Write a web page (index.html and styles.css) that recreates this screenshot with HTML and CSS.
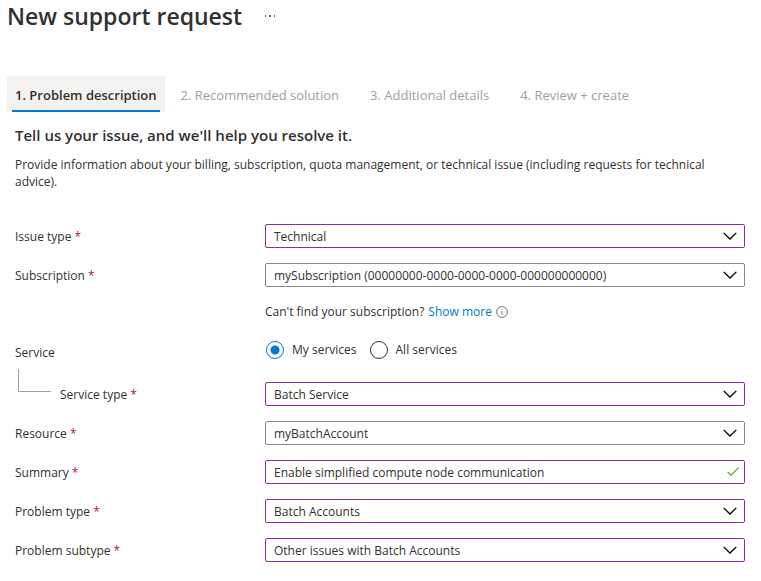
FILE: index.html
```html
<!DOCTYPE html>
<html lang="en">
<head>
<meta charset="utf-8">
<meta name="viewport" content="width=device-width, initial-scale=1">
<title>New support request</title>
<link rel="stylesheet" href="styles.css">
</head>
<body>
<svg class="symbols" aria-hidden="true">
  <symbol id="chevron" viewBox="0 0 14 8"><path d="M.7.9 7 7 13.3.9" fill="none" stroke="currentColor" stroke-width="1.3"/></symbol>
</svg>
<header class="page-header">
  <h1 class="page-title">New support request</h1>
  <button class="more" type="button" aria-label="More actions">
    <svg width="12" height="2" viewBox="0 0 12 2"><path d="M1 0h1v2H1zM5 0h2v2H5zM10 0h1v2h-1z" fill="#605e5c"/></svg>
  </button>
</header>
<nav class="tabs">
  <button class="tab tab-active" type="button">1. Problem description</button>
  <button class="tab" type="button" disabled>2. Recommended solution</button>
  <button class="tab" type="button" disabled>3. Additional details</button>
  <button class="tab" type="button" disabled>4. Review + create</button>
</nav>
<main class="content">
  <h2 class="section-title">Tell us your issue, and we'll help you resolve it.</h2>
  <p class="intro">Provide information about your billing, subscription, quota management, or technical issue (including requests for technical advice).</p>
  <form class="form">
    <div class="row">
      <label class="label" for="issue">Issue type <span class="required">*</span></label>
      <div class="field"><select class="control edited" id="issue"><option>Technical</option></select><svg class="chevron"><use href="#chevron"/></svg></div>
    </div>
    <div class="row">
      <label class="label" for="subscription">Subscription <span class="required">*</span></label>
      <div class="field"><select class="control" id="subscription"><option>mySubscription (00000000-0000-0000-0000-000000000000)</option></select><svg class="chevron"><use href="#chevron"/></svg></div>
    </div>
    <div class="row">
      <p class="hint">Can't find your subscription? <a class="link" href="#">Show more</a>
        <svg class="info" viewBox="0 0 12 12"><circle cx="6" cy="6" r="5.4" fill="none" stroke="#797775"/><path d="M5.5 3h1v1h-1zM5.5 5h1v4h-1z" fill="#797775"/></svg>
      </p>
    </div>
    <div class="row service-row" role="radiogroup" aria-labelledby="service">
      <span class="label" id="service">Service</span>
      <div class="radios">
        <label class="choice"><input class="radio" type="radio" name="service" checked>My services</label>
        <label class="choice"><input class="radio" type="radio" name="service">All services</label>
      </div>
    </div>
    <div class="row">
      <label class="label nested" for="service-type"><span class="branch"></span><span>Service type <span class="required">*</span></span></label>
      <div class="field"><select class="control edited" id="service-type"><option>Batch Service</option></select><svg class="chevron"><use href="#chevron"/></svg></div>
    </div>
    <div class="row">
      <label class="label" for="resource">Resource <span class="required">*</span></label>
      <div class="field"><select class="control" id="resource"><option>myBatchAccount</option></select><svg class="chevron"><use href="#chevron"/></svg></div>
    </div>
    <div class="row">
      <label class="label" for="summary">Summary <span class="required">*</span></label>
      <div class="field"><input class="control edited" id="summary" type="text" value="Enable simplified compute node communication"><svg class="check" viewBox="0 0 12 9"><path d="M.5 4.8 4 8.2 11.6.6" fill="none" stroke="#57a300" stroke-width="1.1"/></svg></div>
    </div>
    <div class="row">
      <label class="label" for="problem">Problem type <span class="required">*</span></label>
      <div class="field"><select class="control edited" id="problem"><option>Batch Accounts</option></select><svg class="chevron"><use href="#chevron"/></svg></div>
    </div>
    <div class="row">
      <label class="label" for="subtype">Problem subtype <span class="required">*</span></label>
      <div class="field"><select class="control edited" id="subtype"><option>Other issues with Batch Accounts</option></select><svg class="chevron"><use href="#chevron"/></svg></div>
    </div>
  </form>
</main>
</body>
</html>
```
FILE: styles.css
```css
* { box-sizing: border-box; }

body {
  margin: 0;
  background: #fff;
  color: #323130;
  font: 12px/18px "Segoe UI", "Open Sans", "Noto Sans", sans-serif;
}

h1, h2, p { margin: 0; }

button, input, select { font: inherit; color: inherit; }

.symbols { display: none; }

.page-header {
  display: flex;
  align-items: center;
  gap: 16px;
  padding: 0 7px;
}

.page-title { font-size: 23px; line-height: 32px; font-weight: 600; }

.more {
  display: flex;
  padding: 6px;
  border: 0;
  background: none;
}

.tabs {
  display: flex;
  margin: 44px 7px 0;
}

.tab {
  height: 36px;
  padding: 2px 8px 0;
  margin-right: 15px;
  border: 0;
  background: none;
  color: #a19f9d;
  font-size: 13px;
  white-space: nowrap;
}

.tab-active {
  position: relative;
  margin-right: 8px;
  background: #f3f2f1;
  color: #323130;
  font-weight: 600;
}

.tab-active::after {
  content: "";
  position: absolute;
  right: 5px;
  bottom: 0;
  left: 5px;
  height: 2px;
  background: #0078d4;
}

.content { padding: 11px 16px 16px 15px; }

.section-title { font-size: 15px; line-height: 24px; font-weight: 600; }

.intro { margin-top: 9px; line-height: 17px; }

.form {
  display: flex;
  flex-direction: column;
  gap: 15px;
  margin-top: 34px;
}

.row {
  display: grid;
  grid-template-columns: 250px minmax(0, 1fr);
  align-items: center;
}

.label { padding-top: 2px; }

.required { color: #a4262c; }

.field { position: relative; }

.control {
  display: block;
  width: 100%;
  height: 24px;
  padding: 0 32px 0 8px;
  border: 1px solid #8a8886;
  border-radius: 2px;
  background: #fff;
  appearance: none;
}

select.control { padding-top: 2px; }

.edited { border-color: #8a2da5; }

.chevron, .check {
  position: absolute;
  pointer-events: none;
}

.chevron {
  top: 8px;
  right: 8px;
  width: 14px;
  height: 8px;
  color: #000;
}

.check {
  top: 7px;
  right: 6px;
  width: 12px;
  height: 9px;
}

.hint {
  display: flex;
  grid-column: 2;
  align-items: center;
  gap: 4px;
  line-height: 20px;
}

.link { color: #0078d4; text-decoration: none; }

.info { width: 12px; height: 12px; }

.service-row { min-height: 30px; }

.radios {
  display: flex;
  gap: 12px;
  padding-bottom: 4px;
}

.choice {
  display: flex;
  align-items: center;
  gap: 8px;
}

.radio {
  width: 18px;
  height: 18px;
  margin: 0 0 0 1px;
  border: 1px solid #323130;
  border-radius: 50%;
  background: #fff;
  appearance: none;
}

.radio:checked {
  border-color: #0078d4;
  background: radial-gradient(circle, #0078d4 4px, #fff 5px);
}

.nested {
  display: flex;
  align-items: center;
  gap: 9px;
}

.branch {
  width: 33px;
  height: 23px;
  margin: -30px 0 0 3px;
  border: solid #a19f9d;
  border-width: 0 0 1px 1px;
}
```
